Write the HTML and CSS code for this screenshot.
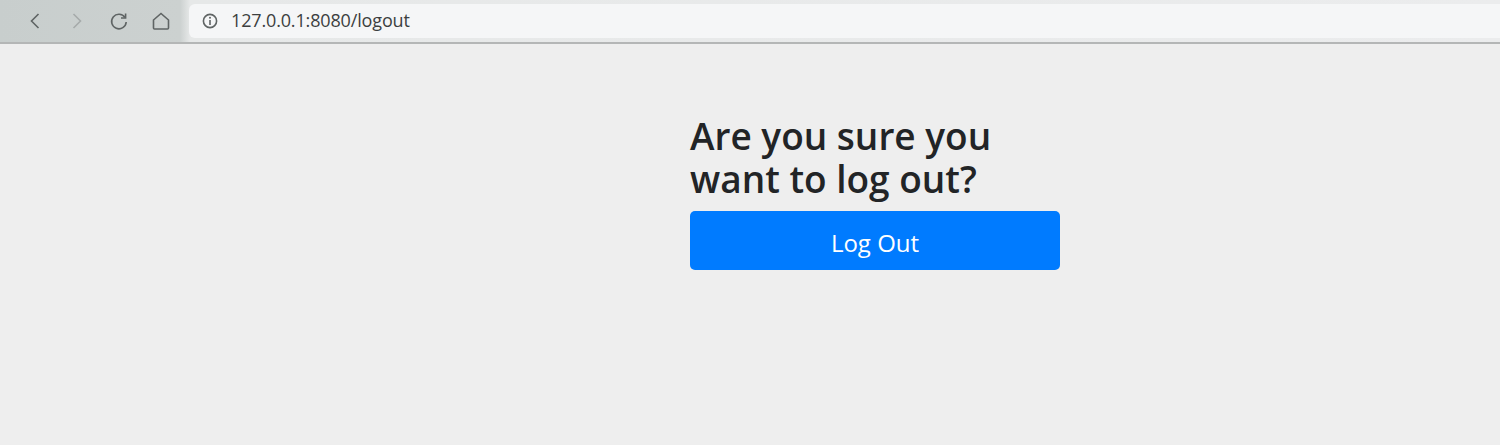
FILE: index.html
```html
<!DOCTYPE html>
<html lang="en">
<head>
<meta charset="utf-8">
<title>Log out</title>
<link rel="stylesheet" href="styles.css">
</head>
<body>
<header class="toolbar">
  <div class="nav">
    <svg class="icon" viewBox="0 0 20 20"><path d="M13.5 3 L6.5 10 L13.5 17" class="stroke"/></svg>
    <svg class="icon dim" viewBox="0 0 20 20"><path d="M6.5 3 L13.5 10 L6.5 17" class="stroke"/></svg>
    <svg class="icon" viewBox="0 0 20 20"><path d="M16 6.5 A7.3 7.3 0 1 0 17.2 11" class="stroke"/><path d="M16.6 2.5 V7 H12" class="stroke"/></svg>
    <svg class="icon" viewBox="0 0 20 20"><path d="M2.5 9 L10 2.5 L17.5 9 V17 Q17.5 18 16.5 18 H3.5 Q2.5 18 2.5 17 Z" class="stroke"/></svg>
  </div>
  <div class="address">
    <svg class="info" viewBox="0 0 16 16"><circle cx="8" cy="8" r="6.6" class="stroke"/><path d="M8 7 V12" class="stroke"/><circle cx="8" cy="4.8" r="1" class="dot"/></svg>
    <span class="url">127.0.0.1:8080/logout</span>
  </div>
</header>
<main class="page">
  <section class="panel">
    <h1 class="title">Are you sure you want to log out?</h1>
    <button class="logout" type="button">Log Out</button>
  </section>
</main>
</body>
</html>
```
FILE: styles.css
```css
* { box-sizing: border-box; }
html, body { margin: 0; height: 100%; }
body {
  background: #eeeeee;
  font-family: "Open Sans", "Noto Sans", sans-serif;
  overflow: hidden;
}
.toolbar {
  height: 44px;
  display: flex;
  align-items: flex-start;
  padding: 4px 0 0 12px;
  background: linear-gradient(90deg, #c8cecd 0, #ccd1d0 180px, #e6e8e8 190px, #ebeced 100%);
  border-bottom: 2px solid #b4b6b6;
}
.nav {
  display: flex;
  gap: 22px;
  padding: 7px 0 0 13px;
  width: 177px;
}
.icon { width: 20px; height: 20px; flex: none; }
.stroke { fill: none; stroke: #5f6464; stroke-width: 1.6; }
.dim .stroke { stroke: #a6abab; }
.dot { fill: #5f6464; }
.address {
  flex: 1;
  height: 34px;
  background: #f5f6f7;
  border-radius: 6px 0 0 6px;
  display: flex;
  align-items: center;
  padding: 0 0 1px 13px;
  gap: 13px;
}
.info { width: 16px; height: 16px; }
.url { font-size: 18px; color: #3c3f40; letter-spacing: -0.15px; position: relative; top: -1px; }
.page { display: flex; padding: 70px 0 0 690px; }
.panel { width: 370px; }
.title {
  margin: 0 0 11px;
  width: 340px;
  font-size: 37px;
  font-weight: 600;
  line-height: 43px;
  color: #222426;
}
.logout {
  display: block;
  width: 100%;
  height: 59px;
  border: 0;
  border-radius: 5px;
  background: #007bff;
  color: #fff;
  font-family: inherit;
  font-size: 24px;
  padding: 4px 0 0;
}
```
